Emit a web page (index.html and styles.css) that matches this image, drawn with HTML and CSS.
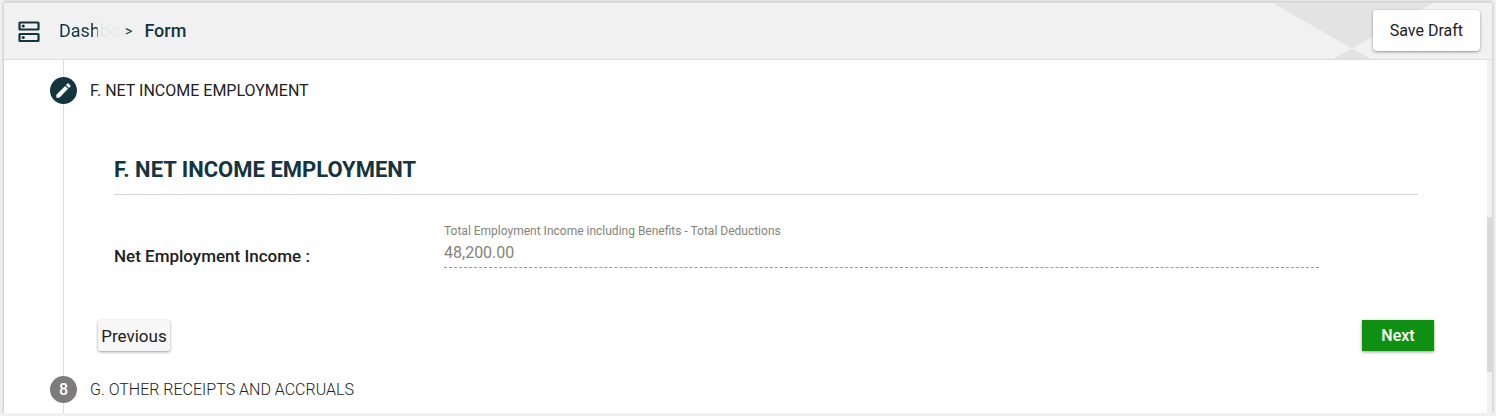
FILE: index.html
```html
<!DOCTYPE html>
<html lang="en">
<head>
    <meta charset="UTF-8">
    <meta name="viewport" content="width=device-width, initial-scale=1.0">
    <title>Form</title>
    <link rel="stylesheet" href="styles.css">
</head>
<body>

    <div class="shell">
        <header class="topbar">
            <svg class="topbar-icon" viewBox="0 0 22 24" aria-hidden="true">
                <rect x="1.500" y="3.500" width="19" height="7" rx="0.5"/>
                <rect x="1.500" y="15" width="19" height="7" rx="0.5"/>
                <circle cx="5.200" cy="7" r="1.6"/>
                <circle cx="5.200" cy="18.500" r="1.6"/>
            </svg>
            <nav class="breadcrumb" aria-label="Breadcrumb">
                <a class="crumb-link" href="#">Dashboard</a>
                <span class="crumb-sep">&gt;</span>
                <span class="crumb-current">Form</span>
            </nav>
            <svg class="topbar-pattern" viewBox="0 0 164 56" aria-hidden="true">
                <path d="M0 0H160L79 45.500Z"/>
                <path d="M79 45.500L98 56H60Z"/>
            </svg>
            <button type="button" class="btn btn-save">Save Draft</button>
        </header>

        <div class="scroll-area">
            <main class="stepper">
                <div class="step active">
                    <span class="step-badge">
                        <svg viewBox="0 0 24 24" aria-hidden="true">
                            <path d="M3 17.250V21h3.750L17.810 9.940l-3.750-3.750L3 17.250zM20.710 7.040a1 1 0 0 0 0-1.410l-2.340-2.340a1 1 0 0 0-1.410 0l-1.830 1.830 3.750 3.750 1.830-1.830z"/>
                        </svg>
                    </span>
                    <span class="step-label">F. NET INCOME EMPLOYMENT</span>
                </div>

                <form class="panel">
                    <section class="section">
                        <h2>F. NET INCOME EMPLOYMENT</h2>
                        <div class="field-row">
                            <label class="field-name" for="netIncome">Net Employment Income :</label>
                            <div class="field">
                                <label class="field-hint" for="netIncome">Total Employment Income including Benefits - Total Deductions</label>
                                <input type="text" id="netIncome" value="48,200.00" disabled>
                            </div>
                        </div>
                    </section>
                    <div class="actions">
                        <button type="button" class="btn btn-previous">Previous</button>
                        <button type="button" class="btn btn-next">Next</button>
                    </div>
                </form>

                <div class="step">
                    <span class="step-badge">8</span>
                    <span class="step-label">G. OTHER RECEIPTS AND ACCRUALS</span>
                </div>
            </main>
            <div class="scroll-track"><div class="scroll-thumb"></div></div>
        </div>
    </div>

</body>
</html>
```

FILE: styles.css
```css
* {
    box-sizing: border-box;
}

body {
    display: flex;
    min-height: 100vh;
    margin: 0;
    padding: 2px 4px 3px;
    background-color: #f0f0f0;
    color: #212121;
    font-family: Roboto, sans-serif;
    font-size: 16px;
}

.shell {
    display: flex;
    flex: 1;
    flex-direction: column;
    background-color: #ffffff;
    box-shadow: 0 0 3px rgba(0, 0, 0, 0.3);
    clip-path: inset(-2px -4px 0);
}

/* Top bar */
.topbar {
    display: flex;
    align-items: center;
    height: 58px;
    padding: 0 12px 1px 14px;
    background-color: #f1f1f1;
    border-top: 1px solid #dddddd;
    border-bottom: 1px solid #dddddd;
}

.topbar-icon {
    width: 22px;
    height: 24px;
    fill: none;
    stroke: #14353f;
    stroke-width: 2.2;
}

.topbar-icon circle {
    fill: #14353f;
    stroke: none;
}

.breadcrumb {
    display: flex;
    align-items: center;
    margin-left: 19px;
    color: #14353f;
    font-size: 18px;
}

/* the name fades out and runs on under the separator */
.crumb-link {
    margin-right: -21px;
    background: linear-gradient(90deg, #14353f 38px, #dfe2e3 39px, #f1f1f1 76px);
    background-clip: text;
    -webkit-background-clip: text;
    color: transparent;
    text-decoration: none;
}

.crumb-sep {
    margin-right: 12px;
    font-size: 14px;
}

.crumb-current {
    font-weight: 500;
}

.topbar-pattern {
    flex: none;
    align-self: flex-start;
    width: 164px;
    height: 56px;
    margin-left: auto;
    margin-right: -64px;
    fill: #e3e3e3;
}

.btn {
    border: none;
    color: #212121;
    cursor: pointer;
    font-family: inherit;
    font-size: 16px;
}

.btn-save {
    z-index: 1;
    height: 41px;
    padding: 0 17px;
    background-color: #ffffff;
    border-radius: 4px;
    box-shadow: 0 1px 3px rgba(0, 0, 0, 0.4);
}

/* Stepper */
.scroll-area {
    display: flex;
    flex: 1;
}

.stepper {
    flex: 1;
    padding: 17px 53px 10px 46px;
    background: linear-gradient(#dcdcdc, #dcdcdc) 59px 0 / 1px 100% no-repeat;
}

.step {
    display: flex;
    align-items: center;
    gap: 13px;
    font-weight: 300;
}

.step.active {
    font-weight: 400;
}

.step-badge {
    display: flex;
    align-items: center;
    justify-content: center;
    width: 27px;
    height: 27px;
    border-radius: 50%;
    background-color: #7c7c7c;
    color: #ffffff;
    font-weight: 500;
}

.active .step-badge {
    background-color: #14353f;
}

.step-badge svg {
    width: 19px;
    height: 19px;
    fill: #ffffff;
}

.panel {
    margin-left: 48px;
    padding: 50px 0 25px;
}

.section {
    padding: 0 16px;
}

h2 {
    margin: 0;
    padding-bottom: 8px;
    border-bottom: 1px solid #d3d3d3;
    color: #14353f;
    font-size: 22px;
    font-weight: 700;
    line-height: 32px;
}

.field-row {
    display: flex;
    align-items: flex-end;
    margin-top: 28px;
    padding-right: 99px;
}

.field-name {
    width: 330px;
    font-size: 17px;
    font-weight: 500;
    line-height: 24px;
}

.field {
    flex: 1;
}

.field-hint {
    display: block;
    color: #84847a;
    font-size: 12px;
    line-height: 16px;
}

.field input {
    display: block;
    width: 100%;
    height: 29px;
    padding: 0 0 1px;
    background: none;
    border: none;
    border-bottom: 1px dashed #999999;
    color: #84847a;
    font-family: inherit;
    font-size: 16px;
}

/* Buttons under the form */
.actions {
    display: flex;
    justify-content: space-between;
    margin-top: 52px;
}

.actions .btn {
    width: 72px;
    height: 31px;
    padding: 0;
    box-shadow: 0 1px 3px rgba(0, 0, 0, 0.4);
}

.actions .btn-previous {
    background-color: #f7f7f7;
    border-radius: 2px;
    font-size: 17px;
}

.actions .btn-next {
    background-color: #109013;
    color: #ffffff;
    font-weight: 500;
}

.scroll-track {
    display: flex;
    flex-direction: column;
    width: 5px;
    background-color: #f1f1f1;
}

.scroll-track::before {
    content: "";
    flex: 157;
}

.scroll-track::after {
    content: "";
    flex: 41;
}

.scroll-thumb {
    flex: 155;
    background-color: #d9d9d9;
}
```
